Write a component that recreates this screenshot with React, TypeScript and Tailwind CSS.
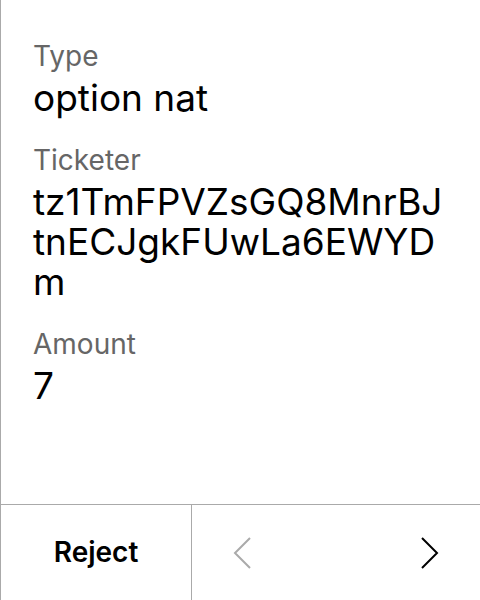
import React from 'react'

type Field = {
    label: string,
    value: string,
}

const fields: Field[] = [
    { label: 'Type', value: 'option nat' },
    { label: 'Ticketer', value: 'tz1TmFPVZsGQ8MnrBJtnECJgkFUwLa6EWYDm' },
    { label: 'Amount', value: '7' },
]

function ChevronLeft({ className }: { className?: string }) {
    return (
        <svg width="20" height="32" viewBox="0 0 20 32" fill="none" className={className}>
            <path d="M18 1 L3 16 L18 31" stroke="currentColor" strokeWidth="2" />
        </svg>
    )
}

function ChevronRight({ className }: { className?: string }) {
    return (
        <svg width="20" height="32" viewBox="0 0 20 32" fill="none" className={className}>
            <path d="M2 1 L17 16 L2 31" stroke="currentColor" strokeWidth="2" />
        </svg>
    )
}

export default function App() {
    return (
        <div className="flex h-[600px] w-[480px] flex-col border-l border-[#aaaaaa] bg-white font-['Inter',sans-serif] text-black [font-optical-sizing:none]">
            {/* Details */}
            <div className="flex flex-1 flex-col gap-[24px] px-8 pt-[38px]">
                {fields.map((field) => (
                    <div key={field.label} className="flex flex-col">
                        <span className="mb-[4px] text-[28px] leading-[36px] text-[#666666]">{field.label}</span>
                        <span className="break-all text-[37px] leading-[40px]">{field.value}</span>
                    </div>
                ))}
            </div>

            {/* Actions */}
            <div className="flex h-[96px] border-t border-[#aaaaaa]">
                <button className="flex w-[191px] items-center justify-center border-r border-[#aaaaaa] pb-[1px] text-[28px] font-semibold">
                    Reject
                </button>
                <div className="flex flex-1 items-center justify-between pl-[40px] pr-[40px]">
                    <ChevronLeft className="text-[#aaaaaa]" />
                    <ChevronRight className="text-black" />
                </div>
            </div>
        </div>
    )
}
